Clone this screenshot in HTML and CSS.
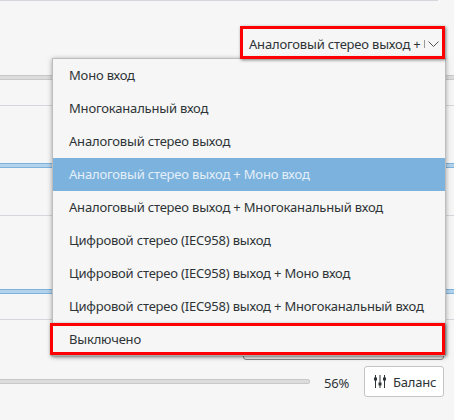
FILE: index.html
```html
<!DOCTYPE html>
<html>
<head>
    <title>Профиль</title>
    <link rel="stylesheet" href="styles.css">
</head>
<body>
    <div class="page">
        <div class="row row-first">
            <div class="combo combo-top">
                <span class="combo-text">Аналоговый стерео выход +</span>
                <span class="combo-sep"></span>
                <svg class="combo-arrow" width="11" height="6" viewBox="0 0 11 6"><path d="M.5 .5l5 5 5-5" fill="none" stroke="#555" stroke-width="1"/></svg>
            </div>
            <div class="track"></div>
        </div>
        <div class="row row-second">
            <div class="track track-blue"></div>
        </div>
        <div class="row row-third">
            <div class="track track-blue"></div>
        </div>
        <div class="row-last">
            <div class="combo combo-bottom"></div>
            <div class="volume">
                <div class="track track-volume"></div>
                <span class="percent">56%</span>
                <button class="balance">
                    <svg width="12" height="13" viewBox="0 0 12 13"><path d="M1.500 0v13M6 0v13M10.500 0v13" fill="none" stroke="#2e3436" stroke-width="1"/><path d="M0 2.500h3v3h-3zM4.500 7.500h3v3h-3zM9 2.500h3v3h-3z" fill="#2e3436"/></svg>
                    Баланс
                </button>
            </div>
        </div>
    </div>

    <ul class="menu">
        <li>Моно вход</li>
        <li>Многоканальный вход</li>
        <li>Аналоговый стерео выход</li>
        <li class="selected">Аналоговый стерео выход + Моно вход</li>
        <li>Аналоговый стерео выход + Многоканальный вход</li>
        <li>Цифровой стерео (IEC958) выход</li>
        <li>Цифровой стерео (IEC958) выход + Моно вход</li>
        <li>Цифровой стерео (IEC958) выход + Многоканальный вход</li>
        <li>Выключено</li>
    </ul>

    <div class="mark mark-combo"></div>
    <div class="mark mark-off"></div>
</body>
</html>
```

FILE: styles.css
```css
* {
    box-sizing: border-box;
}

html, body {
    height: 100%;
}

body {
    margin: 0;
    background: #f6f6f6;
    color: #2e3436;
    font-family: 'Noto Sans', 'Open Sans', sans-serif;
    font-size: 13px;
    letter-spacing: -0.19px;
    overflow: hidden;
}

.page {
    width: 438px;
    border-top: 1px solid #d3d6da;
}

.row {
    position: relative;
    border-bottom: 1px solid #d3d6da;
    width: 454px;
    display: flex;
    flex-direction: column;
}

.row-first {
    height: 105px;
    padding-top: 74px;
}

.row-second {
    height: 110px;
    padding-top: 57px;
}

.row-third {
    height: 104px;
    padding-top: 73px;
}

.track {
    height: 5px;
    background: #dcdcdc;
    border-top: 1px solid #c8c8c8;
    border-bottom: 1px solid #c8c8c8;
}

.track-blue {
    background: #b3d2ec;
    border-color: #7cb3de;
}

.combo {
    position: absolute;
    right: 10px;
    width: 201px;
    height: 30px;
    background: #fff;
    border: 1px solid #b8b8b8;
    border-radius: 3px;
}

.combo-top {
    top: 28px;
    display: flex;
    align-items: center;
    padding: 0 0 0 6px;
    background: #f6f6f6;
    border: none;
}

.combo-text {
    flex: 1;
    white-space: nowrap;
}

.combo-sep {
    width: 1px;
    height: 8px;
    margin-right: 3px;
    background: #999;
}

.combo-arrow {
    margin-right: 5px;
}

.row-last {
    width: 454px;
    padding: 10px 10px 0 0;
}

.combo-bottom {
    position: static;
    margin-left: auto;
    background: #f0f0f0;
    border-color: #888;
}

.volume {
    display: flex;
    align-items: center;
    margin-top: 6px;
}

.track-volume {
    width: 310px;
    border-radius: 0 3px 3px 0;
    border-right: 1px solid #c8c8c8;
}

.percent {
    width: 54px;
    padding-left: 14px;
    padding-top: 2px;
}

.balance {
    display: flex;
    align-items: center;
    gap: 7px;
    width: 80px;
    height: 31px;
    padding: 0 0 0 9px;
    background: #fff;
    border: 1px solid #c4c4c4;
    border-radius: 3px;
    color: #2e3436;
    font: inherit;
    letter-spacing: -0.19px;
}

.menu {
    position: absolute;
    top: 58px;
    left: 52px;
    width: 394px;
    margin: 0;
    padding: 0;
    list-style: none;
    background: #f6f6f6;
    border: 1px solid #bdbdbd;
    border-bottom: none;
    box-shadow: 0 1px 5px rgba(0, 0, 0, 0.35);
}

.menu li {
    height: 33px;
    line-height: 33px;
    padding-left: 16px;
    white-space: nowrap;
}

.menu .selected {
    background: #7cb3de;
    color: #e4eff8;
}

.mark {
    position: absolute;
    border: 3px solid #f00;
    box-shadow: 1px 1px 3px rgba(0, 0, 0, 0.5);
}

.mark-combo {
    top: 26px;
    left: 240px;
    width: 205px;
    height: 33px;
}

.mark-off {
    top: 323px;
    left: 50px;
    width: 395px;
    height: 32px;
}
```
